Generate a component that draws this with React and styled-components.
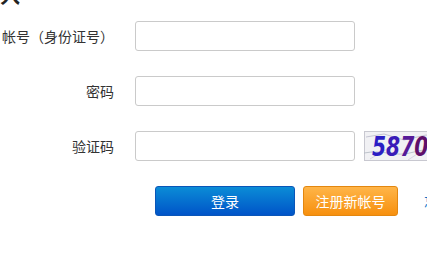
import React from 'react'
import styled, { createGlobalStyle } from 'styled-components'

const GlobalStyle = createGlobalStyle`
  html, body {
    margin: 0;
    padding: 0;
    overflow: hidden;
    background: #fff;
  }
  body {
    font-family: "Noto Sans CJK SC", "Liberation Sans", sans-serif;
    font-size: 14px;
    color: #333;
  }
`

function Captcha() {
  return (
    <CaptchaBox>
      <svg width="90" height="30" viewBox="0 0 90 30">
        <rect x="0" y="0" width="90" height="30" fill="#f1f1f4" />
        <rect x="0.5" y="0.5" width="89" height="29" fill="none" stroke="#c8c8d0" />
        <path d="M2 6 L20 3 L40 9 L62 4 L88 8" stroke="#b9b9c9" fill="none" strokeWidth="0.8" />
        <path d="M0 22 C20 18 30 27 50 21 S80 24 90 20" stroke="#b0b8c0" fill="none" strokeWidth="0.8" />
        <path d="M6 28 L30 14 M44 29 L70 12" stroke="#c4c0d4" fill="none" strokeWidth="0.6" />
        <text
          transform="translate(8 25) scale(0.75 1)"
          fontFamily="DejaVu Sans, sans-serif"
          fontWeight="bold"
          fontStyle="italic"
          fontSize="27"
        >
          <tspan fill="#2b1ec4">5</tspan>
          <tspan fill="#3a1cb8">8</tspan>
          <tspan fill="#561a98">7</tspan>
          <tspan fill="#5e0f6a">0</tspan>
          <tspan fill="#7c1036">2</tspan>
        </text>
      </svg>
    </CaptchaBox>
  )
}

export default function App() {
  return (
    <Page>
      <GlobalStyle />
      <Title>入</Title>
      <Form>
        <Row>
          <Label>帐号（身份证号）</Label>
          <Input type="text" />
        </Row>
        <Row>
          <Label>密码</Label>
          <Input type="password" />
        </Row>
        <Row>
          <Label>验证码</Label>
          <Input type="text" />
          <Captcha />
        </Row>
        <Actions>
          <Button variant="blue">登录</Button>
          <Button variant="orange">注册新帐号</Button>
          <Link href="#">忘记密码？</Link>
        </Actions>
      </Form>
    </Page>
  )
}

const Page = styled.div`
  width: 600px;
  height: 253px;
  overflow: hidden;
`

const Title = styled.div`
  font-size: 20px;
  font-weight: bold;
  color: #222;
  line-height: 20px;
  height: 6px;
  margin-top: -14px;
`

const Form = styled.div`
  padding-top: 29px;
  display: flex;
  flex-direction: column;
  gap: 25px;
`

const Row = styled.div`
  display: flex;
  align-items: center;
  height: 30px;
  white-space: nowrap;
`

const Label = styled.label`
  width: 114px;
  margin-right: 21px;
  text-align: right;
  font-size: 14px;
  color: #333;
  flex-shrink: 0;
`

const Input = styled.input`
  box-sizing: border-box;
  width: 220px;
  height: 30px;
  border: 1px solid #cacaca;
  border-radius: 3px;
  padding: 0 6px;
  font-size: 14px;
  outline: none;
  flex-shrink: 0;
`

const CaptchaBox = styled.div`
  margin-left: 9px;
  height: 30px;
  flex-shrink: 0;
  svg { display: block; }
`

const Actions = styled.div`
  display: flex;
  align-items: center;
  padding-left: 155px;
  white-space: nowrap;
`

const Button = styled.button`
  box-sizing: border-box;
  height: 30px;
  border-radius: 3px;
  font-family: "Noto Sans CJK SC", sans-serif;
  font-size: 14px;
  color: #fff;
  cursor: pointer;
  flex-shrink: 0;
  width: ${p => (p.variant === 'blue' ? '140px' : '95px')};
  margin-right: ${p => (p.variant === 'blue' ? '8px' : '26px')};
  border: 1px solid ${p => (p.variant === 'blue' ? '#0a56b8' : '#e3870f')};
  background: ${p =>
    p.variant === 'blue'
      ? 'linear-gradient(to bottom, #0b8cd6, #0054c8)'
      : 'linear-gradient(to bottom, #ffb548, #f7900e)'};
`

const Link = styled.a`
  color: #0b72c4;
  font-size: 14px;
  text-decoration: none;
  flex-shrink: 0;
`
